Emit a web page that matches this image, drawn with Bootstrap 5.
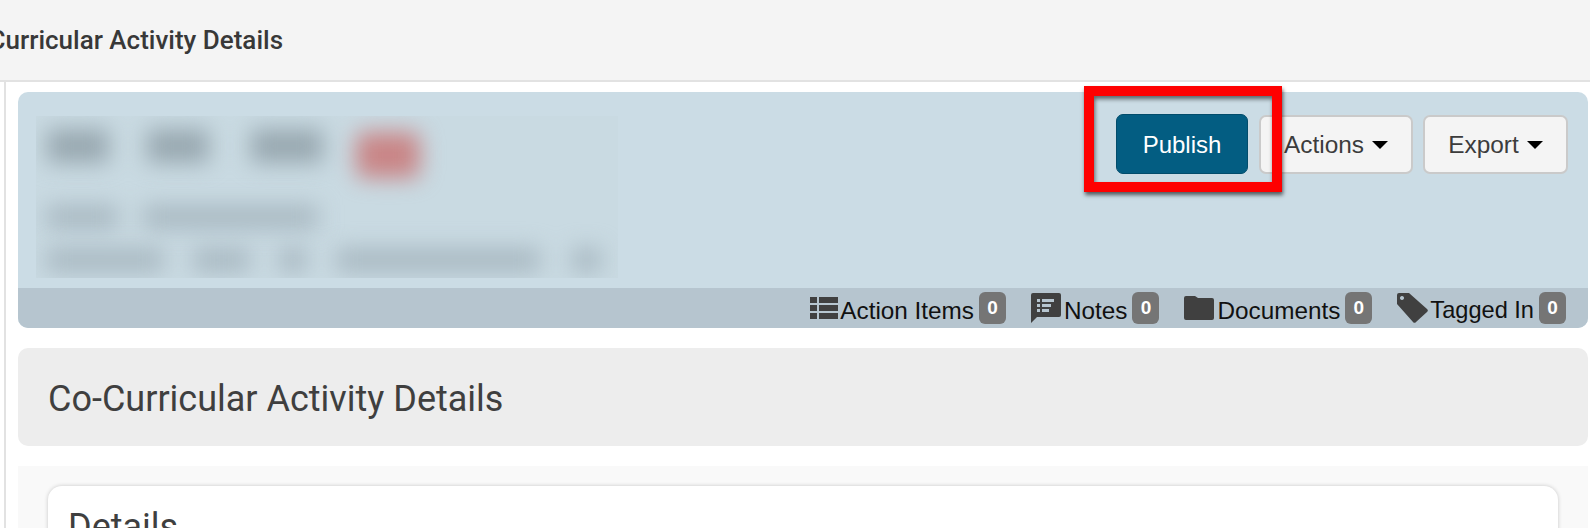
<!DOCTYPE html>
<html lang="en">

<head>
    <meta charset="UTF-8">
    <meta name="viewport" content="width=device-width, initial-scale=1.0">
    <title>Co-Curricular Activity Details</title>
    <link rel="stylesheet" href="https://cdn.jsdelivr.net/npm/bootstrap@5.3.3/dist/css/bootstrap.min.css">
    <style>
        html, body { height: 528px; overflow: hidden; background: #fff; }
        body { font-family: "Liberation Sans", Arial, sans-serif; color: #3c3c3c; }

        .top-bar { height: 82px; background: #f4f4f4; border-bottom: 2px solid #e2e2e2; }
        .top-title { font-family: Roboto, sans-serif; font-weight: 500; font-size: 26px; color: #383838; margin-left: -52px; white-space: nowrap; }

        .page-body { margin-left: 4px; border-left: 2px solid #e2e2e2; padding: 10px 2px 0 12px; height: 446px; }

        .record-panel { background: #cbdce5; border-radius: 10px; height: 236px; overflow: hidden; }
        .record-main { height: 196px; padding: 22px 20px 0 18px; }
        .blur-area { width: 582px; height: 162px; margin-top: 2px; background: #c9dae2; overflow: hidden; }
        .blur-line { filter: blur(11px); }
        .blob { background: #98a8b0; height: 34px; width: 62px; margin-top: 13px; }
        .blob-red { background: #c98586; width: 64px; height: 46px; border-radius: 8px; margin-top: 16px; }
        .blob-soft { background: #a9b9c2; height: 24px; }

        .btn-publish { background: #035d82; border: 1px solid #024c6b; color: #fff; width: 132px; height: 60px; font-size: 24px; border-radius: 7px; padding: 2px 0 0; }
        .btn-plain { background: #f4f4f4; border: 2px solid #cacaca; color: #3c3c3c; height: 59px; margin-top: 1px; font-size: 24.4px; border-radius: 7px; padding: 1px 0 0; }
        .btn-actions { width: 154px; margin-right: -1px; }
        .btn-export { width: 145px; }
        .button-row { column-gap: 11px; }
        .caret-down { display: inline-block; border-left: 8px solid transparent; border-right: 8px solid transparent; border-top: 8px solid #000; margin-left: 8px; vertical-align: 4px; }

        .record-strip { height: 40px; background: #b6c5cf; padding-right: 22px; font-size: 24.3px; color: #111; }
        .strip-item { margin-left: 25px; }
        .strip-item svg { fill: #404040; flex: none; }
        .strip-label { padding-top: 6px; margin-left: 3px; line-height: 1; }
        .tagged-label { font-size: 23.6px; margin-left: 2px; }
        .count-chip { background: #757575; color: #fff; font-weight: 700; font-size: 19px; width: 27px; height: 32px; border-radius: 6px; margin-left: 5px; }

        .red-box { position: absolute; left: 1084px; top: 86px; width: 198px; height: 106px; border: 10px solid #fe0000; box-shadow: 1px 3px 4px rgba(0,0,0,.6), inset 1px 3px 4px rgba(0,0,0,.55); }

        .section-title { background: #ededed; border-radius: 10px; height: 98px; margin-top: 20px; padding-left: 30px; padding-top: 6px; }
        .section-title h2 { font-family: Roboto, sans-serif; font-weight: 400; font-size: 36px; color: #3f3f3f; margin: 0; }

        .section-body { background: #f9f9f9; margin-top: 20px; height: 80px; padding: 20px 30px 0; }
        .details-card { background: #fff; border-radius: 14px 14px 0 0; height: 60px; box-shadow: 0 0 4px rgba(0,0,0,.2); padding: 20px 20px 0; overflow: hidden; }
        .details-card h3 { font-family: Roboto, sans-serif; font-weight: 400; font-size: 36px; color: #3f3f3f; margin: 0; }
    </style>
</head>

<body>
    <div class="top-bar d-flex align-items-center overflow-hidden">
        <div class="top-title">Co-Curricular Activity Details</div>
    </div>

    <div class="page-body">
        <div class="record-panel">
            <div class="record-main d-flex justify-content-between">
                <div class="blur-area">
                    <div class="blur-line d-flex align-items-start">
                        <div class="blob" style="margin-left:11px"></div>
                        <div class="blob" style="margin-left:38px"></div>
                        <div class="blob" style="margin-left:42px;width:72px"></div>
                        <div class="blob-red" style="margin-left:33px"></div>
                    </div>
                    <div class="blur-line d-flex" style="margin-top:27px;padding-left:10px">
                        <div class="blob-soft" style="width:72px"></div>
                        <div class="blob-soft" style="width:175px;margin-left:25px"></div>
                    </div>
                    <div class="blur-line d-flex" style="margin-top:19px;padding-left:10px">
                        <div class="blob-soft" style="width:118px"></div>
                        <div class="blob-soft" style="width:57px;margin-left:29px"></div>
                        <div class="blob-soft" style="width:28px;margin-left:29px"></div>
                        <div class="blob-soft" style="width:204px;margin-left:29px"></div>
                        <div class="blob-soft" style="width:29px;margin-left:32px"></div>
                    </div>
                </div>
                <div class="button-row d-flex align-items-start">
                    <button class="btn btn-publish" type="button">Publish</button>
                    <button class="btn btn-plain btn-actions" type="button">Actions<span class="caret-down"></span></button>
                    <button class="btn btn-plain btn-export" type="button">Export<span class="caret-down"></span></button>
                </div>
            </div>
            <div class="record-strip d-flex justify-content-end align-items-center">
                <div class="strip-item d-flex align-items-center">
                    <svg width="28" height="22" viewBox="0 0 28 22"><path d="M0 0h7v6H0zM9 0h19v6H9zM0 8h7v6H0zM9 8h19v6H9zM0 16h7v6H0zM9 16h19v6H9z"/></svg>
                    <span class="strip-label" style="margin-left:2px">Action Items</span><span class="count-chip d-flex align-items-center justify-content-center">0</span>
                </div>
                <div class="strip-item d-flex align-items-center">
                    <svg width="30" height="30" viewBox="0 0 30 30"><path fill-rule="evenodd" d="M2 0h26a2 2 0 0 1 2 2v20a2 2 0 0 1-2 2H6l-6 6V2a2 2 0 0 1 2-2zM6 6v3h3V6zm5 0v3h12V6zM6 11v3h3v-3zm5 0v3h9v-3zM6 16v3h3v-3zm5 0v3h7v-3z"/></svg>
                    <span class="strip-label">Notes</span><span class="count-chip d-flex align-items-center justify-content-center">0</span>
                </div>
                <div class="strip-item d-flex align-items-center">
                    <svg width="30" height="24" viewBox="0 0 30 24"><path d="M2 0h9l3 2h14a2 2 0 0 1 2 2v18a2 2 0 0 1-2 2H2a2 2 0 0 1-2-2V2a2 2 0 0 1 2-2z"/></svg>
                    <span class="strip-label">Documents</span><span class="count-chip d-flex align-items-center justify-content-center">0</span>
                </div>
                <div class="strip-item d-flex align-items-center">
                    <svg width="31" height="30" viewBox="0 0 31 30"><path fill-rule="evenodd" d="M2 0h10l18 16a2 2 0 0 1 0 3L19 29a2 2 0 0 1-3 0L0 11V2a2 2 0 0 1 2-2zm3 3a2 2 0 1 0 .01 0z"/></svg>
                    <span class="strip-label tagged-label">Tagged In</span><span class="count-chip d-flex align-items-center justify-content-center">0</span>
                </div>
            </div>
        </div>

        <div class="section-title d-flex align-items-center">
            <h2>Co-Curricular Activity Details</h2>
        </div>

        <div class="section-body">
            <div class="details-card">
                <h3>Details</h3>
            </div>
        </div>
    </div>

    <div class="red-box"></div>

    <script src="https://cdn.jsdelivr.net/npm/bootstrap@5.3.3/dist/js/bootstrap.bundle.min.js"></script>
</body>

</html>
